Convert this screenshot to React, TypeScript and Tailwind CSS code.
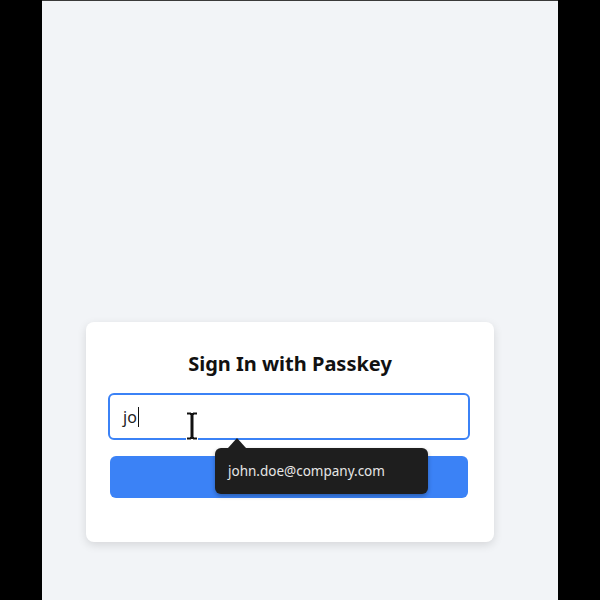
import React from 'react';

const IBeam: React.FC = () => (
  <svg width="14" height="30" viewBox="0 0 14 30" className="absolute left-[185px] top-[411px]">
    <path
      d="M1.5 1h4.5l1 1 1-1h4.5v3H9v22h3.5v3H8l-1-1-1 1H1.5v-3H5V4H1.5z"
      fill="#111"
      stroke="#fff"
      strokeWidth="1"
    />
  </svg>
);

export default function App() {
  return (
    <div className="w-[600px] h-[600px] bg-black relative" style={{ fontFamily: '"Noto Sans", "Open Sans", sans-serif' }}>
      <div className="ml-[42px] w-[516px] h-[600px] border-t border-[#3a3a3a] bg-[#f2f4f7] pt-[321px]">
        <div className="ml-[44px] w-[408px] h-[220px] rounded-lg bg-white shadow-[0_3px_10px_rgba(0,0,0,0.12)] px-[22px] pt-[28px]">
          <h1 className="text-center text-[20px] leading-[28px] font-bold text-[#111]">Sign In with Passkey</h1>
          <div className="mt-[15px] h-[47px] w-[362px] rounded-md border-2 border-[#3b82f6] bg-white flex items-center pl-[13px]">
            <span className="text-[16px] text-[#222]">jo</span>
            <span className="ml-[1px] w-px h-[20px] bg-[#111]" />
          </div>
          <div className="mt-[16px] ml-[2px] h-[42px] w-[358px] rounded-md bg-[#3b82f6]" />
        </div>
      </div>
      <IBeam />
      <div className="absolute left-[215px] top-[448px] w-[213px] h-[46px] rounded-md bg-[#1e1e1e] shadow-[0_2px_4px_rgba(0,0,0,0.3)] flex items-center pl-[13px]">
        <span className="text-[13.5px] text-[#e6e6e6]">john.doe@company.com</span>
      </div>
      <div className="absolute left-[228px] top-[438px] w-0 h-0 border-l-[9px] border-r-[9px] border-b-[10px] border-l-transparent border-r-transparent border-b-[#1e1e1e]" />
    </div>
  );
}
